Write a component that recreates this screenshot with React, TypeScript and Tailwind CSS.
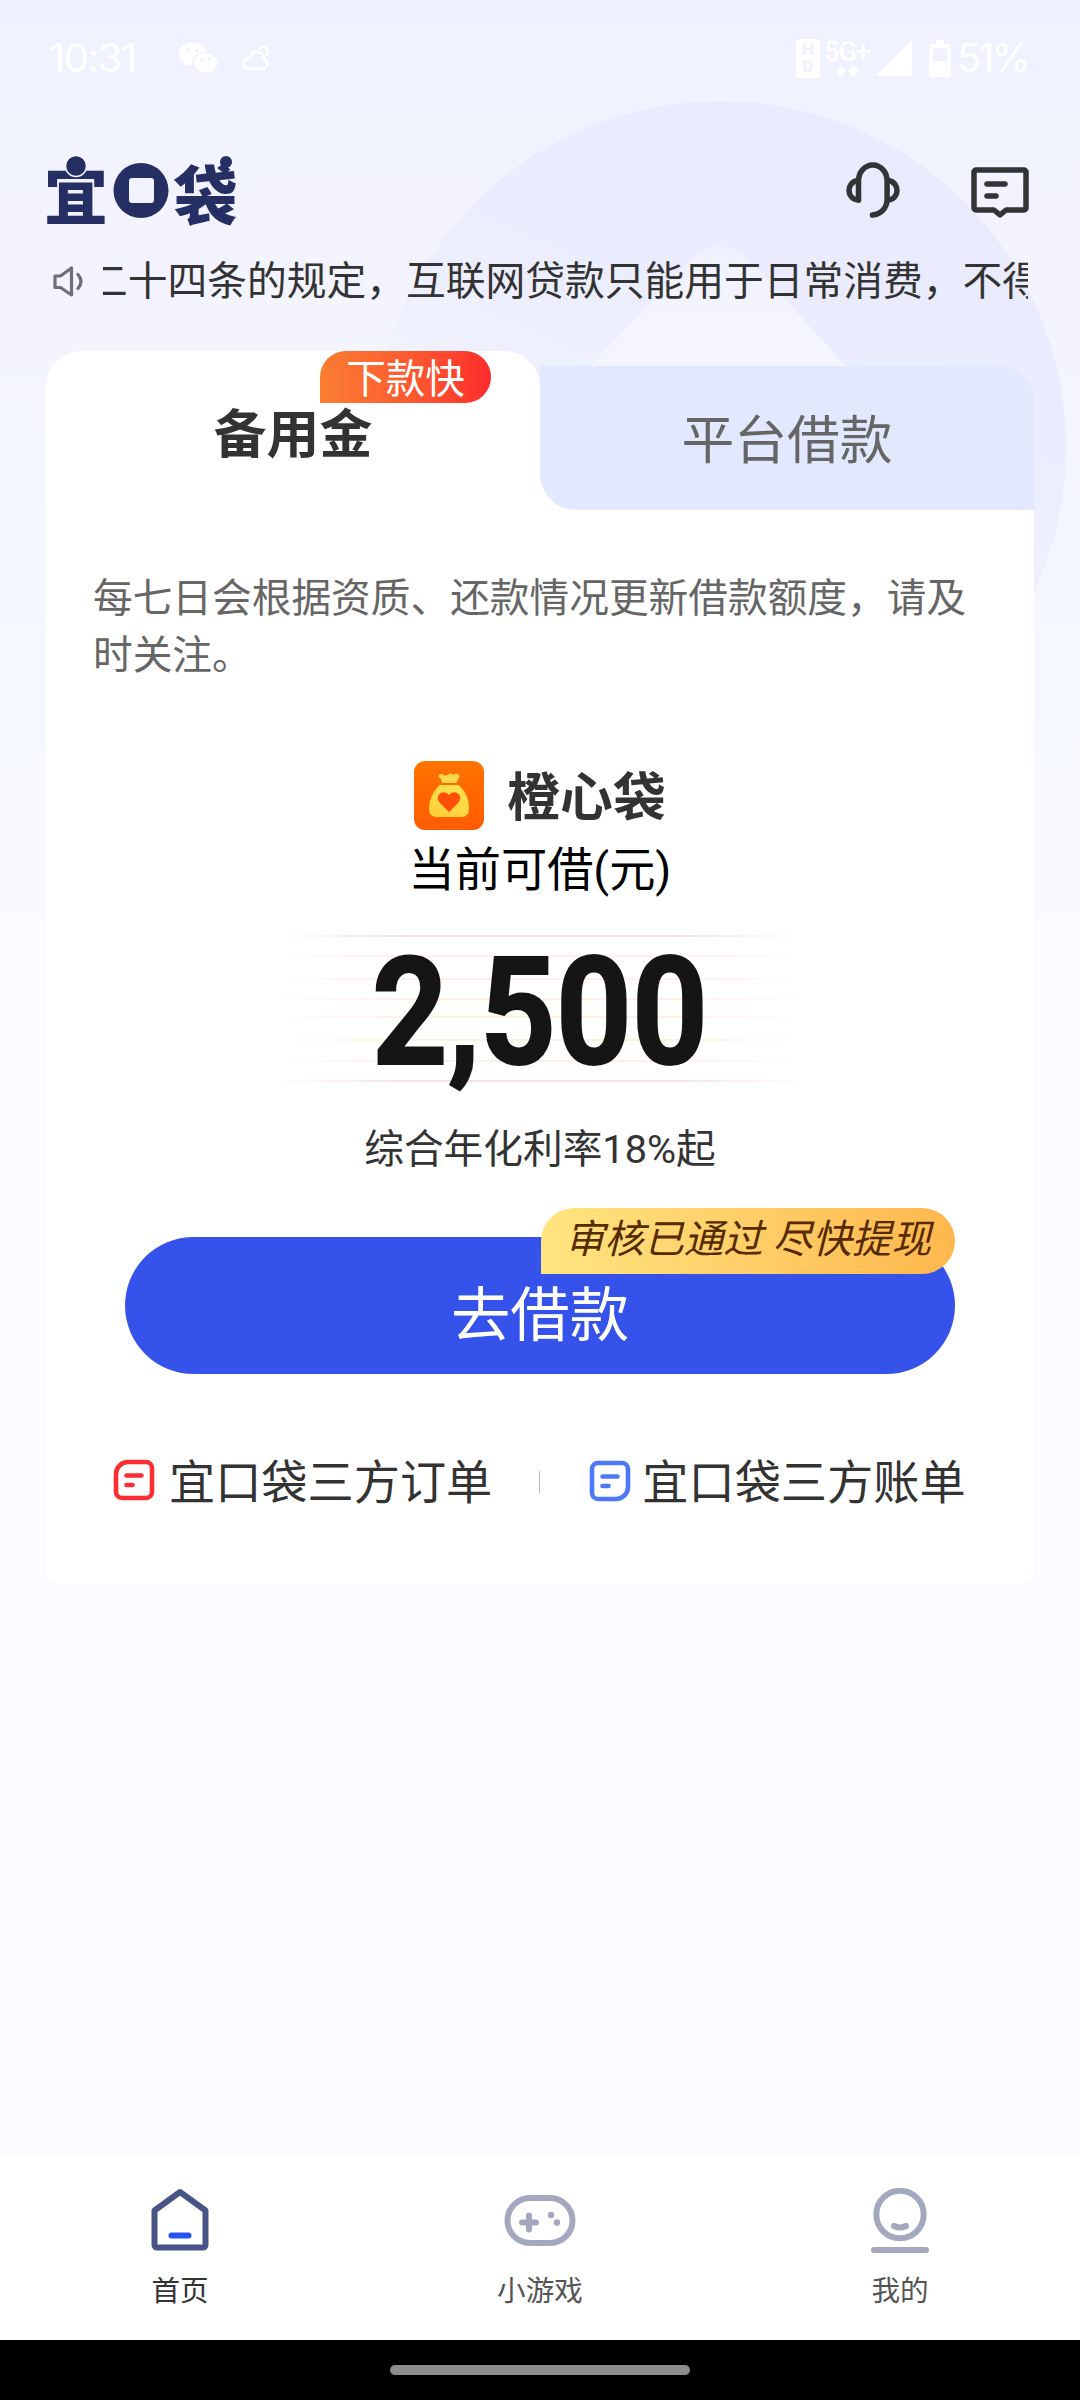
import { RiWechatFill } from "react-icons/ri";

const noteLines = [
  "mt-0 bg-[linear-gradient(90deg,transparent,#f9e0dc_25%,#f9e0dc_75%,transparent)]",
  "mt-[18px] bg-[linear-gradient(90deg,transparent,#fff0e4_25%,#fff0e4_75%,transparent)]",
  "mt-[21px] bg-[linear-gradient(90deg,transparent,#fff0e4_25%,#fff0e4_75%,transparent)]",
  "mt-[18px] bg-[linear-gradient(90deg,transparent,#fff0e0_25%,#fff0e0_75%,transparent)]",
  "mt-[16px] bg-[linear-gradient(90deg,transparent,#fff1de_25%,#fff1de_75%,transparent)]",
  "mt-[21px] bg-[linear-gradient(90deg,transparent,#fff1de_25%,#fff1de_75%,transparent)]",
  "mt-[19px] bg-[linear-gradient(90deg,transparent,#fff0e4_25%,#fff0e4_75%,transparent)]",
  "mt-[18px] bg-[linear-gradient(90deg,transparent,#fbe0e5_25%,#fbe0e5_75%,transparent)]",
];

const Backdrop = () => (
  <svg className="absolute left-0 top-0" width="1080" height="915" viewBox="0 0 1080 915">
    <defs>
      <linearGradient id="sky" x1="0" y1="0" x2="0" y2="1">
        <stop offset="0" stopColor="#f0f1ff" />
        <stop offset="1" stopColor="#f8faff" />
      </linearGradient>
      <linearGradient id="disc" gradientUnits="userSpaceOnUse" x1="860" y1="160" x2="660" y2="620">
        <stop offset="0" stopColor="#e9eafc" />
        <stop offset="0.35" stopColor="#ebecfd" />
        <stop offset="1" stopColor="#f4f6ff" />
      </linearGradient>
      <linearGradient id="peak" gradientUnits="userSpaceOnUse" x1="0" y1="240" x2="0" y2="320">
        <stop offset="0" stopColor="#eff0fe" />
        <stop offset="1" stopColor="#f4f5ff" />
      </linearGradient>
    </defs>
    <rect width="1080" height="915" fill="url(#sky)" />
    <circle cx="720" cy="447" r="346" fill="url(#disc)" />
    <path d="M540 420 L690 260 Q719 232 750 260 L894 420 Z" fill="url(#peak)" />
  </svg>
);

const StatusBar = () => (
  <div className="flex h-[116px] items-center pl-[49px] pr-[52px] text-white">
    <span className="w-[86px] font-['Inter'] text-[40px] leading-none tracking-[-1.5px]">10:31</span>
    <RiWechatFill className="ml-[42px] h-[42px] w-[42px]" />
    <svg className="ml-[22px]" width="30" height="26" viewBox="0 0 30 26" fill="none" stroke="currentColor" strokeWidth="2.6" strokeLinecap="round">
      <path d="M7 24h14a5 5 0 0 0 2-9.600a7 7 0 0 0-14-1.400a5.600 5.600 0 0 0-2 11z" />
      <path d="M18 4a5 5 0 1 1 8 6" />
    </svg>
    <div className="ml-auto flex h-[40px] items-center">
      <div className="flex h-[39px] w-[24px] flex-col items-center justify-center rounded-[3px] bg-white font-['Roboto'] text-[17px] font-black leading-[17px] text-[#f0f1ff]">
        <span>H</span>
        <span>D</span>
      </div>
      <div className="ml-[4px] flex w-[46px] flex-col items-center">
        <span className="font-['Roboto'] text-[27px] font-medium leading-[26px] tracking-[-1px]">5G+</span>
        <svg width="22" height="12" viewBox="0 0 22 12" fill="currentColor">
          <path d="M5 0l5 6l-5 6l-5-6zM17 0l5 6l-5 6l-5-6z" />
        </svg>
      </div>
      <svg className="ml-[6px]" width="36" height="36" viewBox="0 0 36 36" fill="currentColor">
        <path d="M36 0v36H0z" />
      </svg>
      <svg className="ml-[17px]" width="22" height="37" viewBox="0 0 22 37">
        <path fill="currentColor" fillRule="evenodd" d="M7 0h8v4h5a2 2 0 0 1 2 2v29a2 2 0 0 1-2 2H2a2 2 0 0 1-2-2V6a2 2 0 0 1 2-2h5zM4 8v13h14V8z" />
      </svg>
      <span className="ml-[6px] w-[71px] font-['Inter'] text-[40px] leading-none tracking-[-3px]">51%</span>
    </div>
  </div>
);

const Logo = () => (
  <svg className="overflow-visible" width="190" height="69" viewBox="0 0 190 69" fill="#252f63">
    <g fontFamily="'Noto Sans CJK SC', sans-serif" fontWeight="900">
      <text x="-2" y="63" fontSize="64">宜</text>
      <circle cx="95" cy="34.500" r="27.500" />
      <text x="76" y="48" fontSize="38">口</text>
      <text x="127.500" y="63" fontSize="64">袋</text>
    </g>
    <rect x="83" y="22" width="25" height="25" rx="3" fill="#f1f3ff" />
    <circle cx="30" cy="10" r="10.500" stroke="#f1f3ff" strokeWidth="1.500" />
    <circle cx="180" cy="6" r="6" />
  </svg>
);

const Header = () => (
  <div className="flex h-[110px] items-start pl-[46px] pr-[51px] pt-[40px]">
    <Logo />
    <svg className="ml-auto mt-[6px]" width="54" height="56" viewBox="0 0 54 56" fill="none" stroke="#333436" strokeWidth="5.500" strokeLinecap="round" strokeLinejoin="round">
      <path d="M12.500 38V19a14.300 16 0 0 1 28.600 0v18c0 9-6 15.500-14.600 16" />
      <path d="M12 18.500C6 19 3 24 3 28.500s3 9 9.500 9.500" />
      <path d="M42 18.500c6 .5 9 5.500 9 10s-3 9-9 9.500" />
    </svg>
    <svg className="ml-[71px] mt-[11px]" width="58" height="52" viewBox="0 0 58 52" fill="none" stroke="#333436" strokeWidth="5.500" strokeLinecap="round" strokeLinejoin="round">
      <path d="M5 3h48a2 2 0 0 1 2 2v36a2 2 0 0 1-2 2H35l-6 5l-6-5H5a2 2 0 0 1-2-2V5a2 2 0 0 1 2-2z" />
      <path d="M16 17h18M16 29h9" />
    </svg>
  </div>
);

const Notice = () => (
  <div className="flex h-[125px] items-start pl-[53px] pr-[52px] pt-[26px]">
    <svg className="mt-[14px]" width="31" height="31" viewBox="0 0 31 31" fill="none" stroke="#6f7077" strokeWidth="3.200" strokeLinejoin="round" strokeLinecap="round">
      <path d="M2 10h5.500L18.500 2v27L7.500 21.500H2z" />
      <path d="M25 8.500q6 7 0 14" />
    </svg>
    <div className="ml-[19px] h-[60px] flex-1 overflow-hidden whitespace-nowrap">
      <p className="ml-[-15px] text-[39.750px] leading-[60px] text-[#333]">
        二十四条的规定，互联网贷款只能用于日常消费，不得
      </p>
    </div>
  </div>
);

const Tabs = () => (
  <div className="flex h-[159px] items-end">
    <div className="relative flex h-[159px] w-[494px] justify-center rounded-t-[36px] bg-white pt-[54px]">
      <span className="text-[52.800px] font-bold leading-[60px] text-[#333]">备用金</span>
      <span className="absolute left-[274px] top-0 flex h-[52px] w-[171px] items-center justify-center rounded-t-[26px] rounded-br-[26px] bg-gradient-to-r from-[#fa7d32] to-[#fd292d] pt-[5px] text-[39.600px] leading-none text-white">
        下款快
      </span>
    </div>
    <div className="h-[144px] w-[494px] rounded-tr-[36px] bg-linear-to-t from-white from-50% to-transparent to-50%">
      <div className="flex h-full justify-center rounded-bl-[36px] rounded-tr-[36px] bg-[#e2e8fe] pt-[45px]">
        <span className="text-[52.800px] leading-[60px] text-[#666]">平台借款</span>
      </div>
    </div>
  </div>
);

const BagIcon = () => (
  <svg width="70" height="69" viewBox="0 0 70 69">
    <defs>
      <linearGradient id="tile" x1="0" y1="0" x2="0" y2="1">
        <stop offset="0" stopColor="#ff7300" />
        <stop offset="1" stopColor="#ff5c00" />
      </linearGradient>
      <linearGradient id="bag" x1="1" y1="0" x2="0.4" y2="1">
        <stop offset="0" stopColor="#ffe850" />
        <stop offset="1" stopColor="#ffcf3c" />
      </linearGradient>
    </defs>
    <rect width="70" height="69" rx="11" fill="url(#tile)" />
    <path d="M24.500 14q2-2 5 0q2 1.500 5-1q3-1.500 5 1q2.500-3 5.500 0q1.500 2-1 4L42.500 22H28l-1-4q-3-1.500-2.500-4z" fill="#ffd84a" />
    <path d="M26 24h18.500c6 5 11 14 10.500 24q0 8-8 8H23q-8 0-8-8c0-10 5-19 11-24z" fill="url(#bag)" />
    <path d="M35 51L26 42c-7-8 4-15 9-8c5-7 16 0 9 8z" fill="#ff4f08" />
  </svg>
);

const Amount = () => (
  <div className="relative mt-[32px] h-[148px] w-[530px]">
    <div className="flex flex-col">
      {noteLines.map((line, i) => (
        <div key={i} className={`h-[2px] ${line}`} />
      ))}
    </div>
    <div className="absolute inset-x-0 top-0 flex justify-center">
      <span className="mt-[4px] scale-x-[0.875] font-['Roboto'] text-[151px] font-bold leading-[148px] text-[#151515] [-webkit-text-stroke:2px_#151515]">
        2,500
      </span>
    </div>
  </div>
);

const LoanButton = () => (
  <button className="relative mt-[58px] flex h-[137px] w-[830px] justify-center rounded-full bg-[#3553eb] pt-[45px]">
    <span className="text-[59.400px] leading-[68px] text-white">去借款</span>
    <span className="absolute right-0 top-[-29px] flex h-[66px] w-[414px] items-center justify-center whitespace-nowrap rounded-t-[33px] rounded-br-[33px] bg-gradient-to-r from-[#ffe581] to-[#ffb74d] pb-[2px] text-[39.600px] italic leading-none text-[#562b00]">
      审核已通过 尽快提现
    </span>
  </button>
);

const OrderLinks = () => (
  <div className="mt-[76px] flex h-[66px] w-full items-center pl-[67px] text-[46.200px] leading-[66px] text-[#333]">
    <svg className="mb-[6px]" width="42" height="42" viewBox="0 0 42 42" fill="none" stroke="#f92f32" strokeWidth="4.600" strokeLinecap="round">
      <path d="M15 3h18a6 6 0 0 1 6 6v24a6 6 0 0 1-6 6H9a6 6 0 0 1-6-6V15A12 12 0 0 1 15 3z" />
      <path d="M13.500 16.500h15M13.500 26h6" />
    </svg>
    <span className="ml-[14px]">宜口袋三方订单</span>
    <i className="mb-[3px] ml-[47px] h-[22px] w-px bg-[#bbb]" />
    <svg className="mb-[5px] ml-[49px]" width="42" height="42" viewBox="0 0 42 42" fill="none" stroke="#4d79f7" strokeWidth="4.600" strokeLinecap="round">
      <path d="M9 3h24a6 6 0 0 1 6 6v18a12 12 0 0 1-12 12H9a6 6 0 0 1-6-6V9a6 6 0 0 1 6-6z" />
      <path d="M13.500 16.500h15M13.500 26h6" />
    </svg>
    <span className="ml-[11px]">宜口袋三方账单</span>
  </div>
);

const BottomNav = () => (
  <nav className="flex h-[185px] bg-white text-[28.600px] leading-[40px] text-[#555]">
    <div className="flex flex-1 flex-col items-center pt-[33px]">
      <svg width="58" height="64" viewBox="0 0 58 64" fill="none" strokeWidth="6" strokeLinecap="round" strokeLinejoin="round">
        <path d="M29 4L54.500 22.500V57a2.500 2.500 0 0 1-2.500 2.500H6A2.500 2.500 0 0 1 3.500 57V22.500z" stroke="#495486" />
        <path d="M20.500 47.500h17" stroke="#2654f5" />
      </svg>
      <span className="mt-[19px] text-[#333]">首页</span>
    </div>
    <div className="flex flex-1 flex-col items-center pt-[33px]">
      <svg width="72" height="64" viewBox="0 0 72 64" fill="none" stroke="#a4a8bf" strokeWidth="6" strokeLinecap="round">
        <rect x="3.500" y="10" width="65" height="45" rx="22.500" />
        <path d="M18 34.500h14M25 27.500v14" />
        <circle cx="47" cy="27" r="3.200" fill="#a4a8bf" stroke="none" />
        <circle cx="53" cy="34.500" r="3.200" fill="#a4a8bf" stroke="none" />
      </svg>
      <span className="mt-[19px]">小游戏</span>
    </div>
    <div className="flex flex-1 flex-col items-center pt-[33px]">
      <svg width="58" height="65" viewBox="0 0 58 65" fill="none" stroke="#a4a8bf" strokeWidth="6" strokeLinecap="round">
        <circle cx="29" cy="26.500" r="23.700" />
        <path d="M23 38q6 3 12 0M3 62h52" />
      </svg>
      <span className="mt-[18px]">我的</span>
    </div>
  </nav>
);

const App = () => {
  return (
    <div className="relative flex h-[2400px] w-[1080px] flex-col overflow-hidden bg-[#fafbff] font-['Roboto','Noto_Sans_CJK_SC',sans-serif]">
      <Backdrop />

      <div className="relative flex flex-1 flex-col">
        <StatusBar />
        <Header />
        <Notice />

        <main className="mx-[46px]">
          <Tabs />
          <section className="flex h-[1074px] flex-col items-center rounded-b-[12px] bg-white pt-[60px]">
            <p className="w-full pl-[47px] pr-[60px] text-[39.700px] leading-[57px] text-[#666]">
              每七日会根据资质、还款情况更新借款额度，请及时关注。
            </p>

            <div className="mt-[77px] flex h-[69px] items-center">
              <BagIcon />
              <h2 className="ml-[23px] pt-[5px] text-[52.800px] font-bold leading-[64px] text-[#333]">橙心袋</h2>
            </div>
            <p className="mt-[7px] text-[46.200px] leading-[66px] text-black">当前可借(元)</p>

            <Amount />
            <p className="mt-[38px] text-[39.700px] leading-[58px] text-[#333]">综合年化利率18%起</p>

            <LoanButton />
            <OrderLinks />
          </section>
        </main>

        <div className="mt-auto">
          <BottomNav />
          <div className="flex h-[60px] justify-center bg-black pt-[25px]">
            <div className="h-[10px] w-[300px] rounded-full bg-[#8d8d8d]" />
          </div>
        </div>
      </div>
    </div>
  );
};

export default App;
